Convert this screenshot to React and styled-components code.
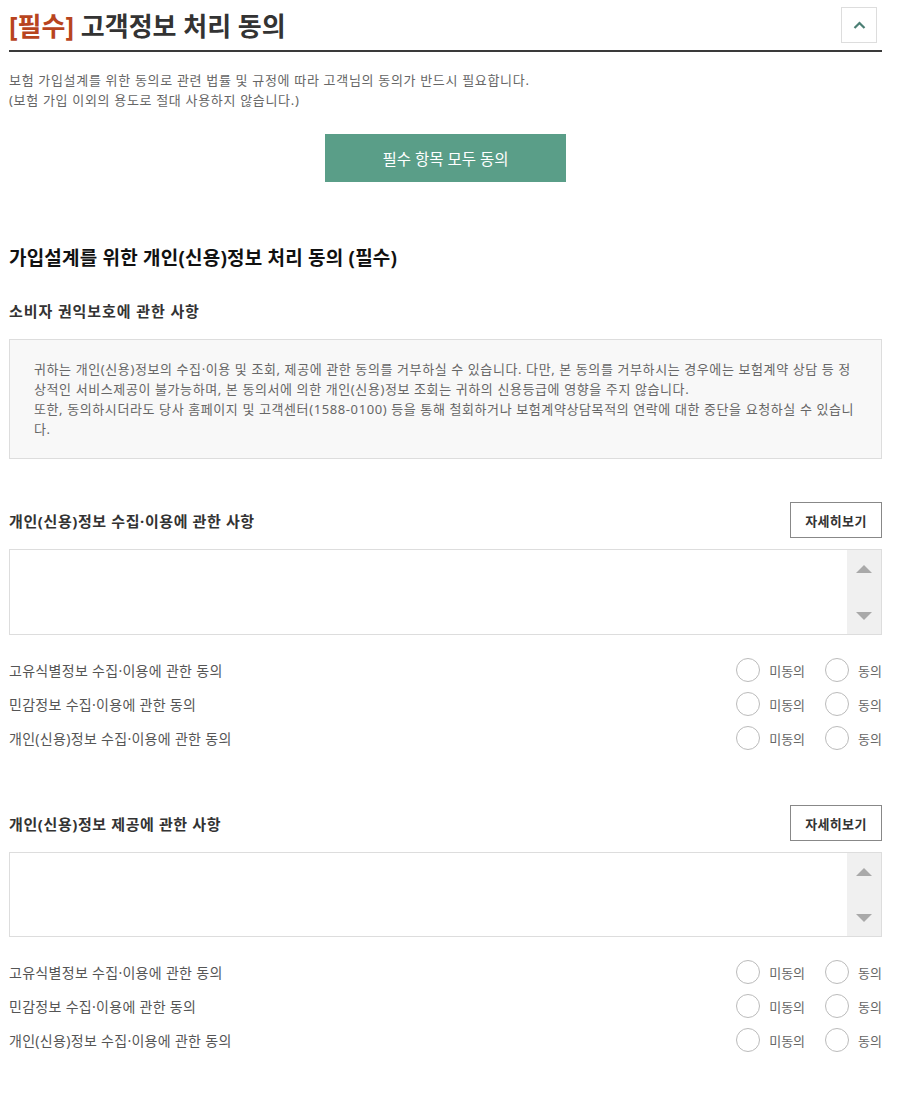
import React from "react";
import styled, { createGlobalStyle } from "styled-components";

const GlobalStyle = createGlobalStyle`
  body {
    margin: 0;
    background: #fff;
    font-family: "Noto Sans", "Noto Sans CJK KR", sans-serif;
  }
`;

const Page = styled.div`
  width: 873px;
  padding: 0 0 40px 9px;
`;

const Header = styled.header`
  display: flex;
  align-items: center;
  justify-content: space-between;
  height: 50px;
  border-bottom: 2px solid #3a3a3a;
`;

const Title = styled.h1`
  margin: 0;
  font-size: 26px;
  font-weight: 700;
  color: #333;
  letter-spacing: 0;
  span {
    color: #b8441e;
  }
`;

const ToggleButton = styled.button`
  width: 36px;
  height: 36px;
  margin-right: 5px;
  border: 1px solid #ddd;
  background: #fff;
  display: flex;
  align-items: center;
  justify-content: center;
  padding: 0;
`;

const Intro = styled.p`
  margin: 18px 0 0;
  font-size: 13px;
  line-height: 20px;
  letter-spacing: 0.68px;
  color: #666;
`;

const AgreeAllRow = styled.div`
  display: flex;
  justify-content: center;
  margin-top: 24px;
`;

const AgreeAllButton = styled.button`
  width: 241px;
  height: 48px;
  border: 0;
  background: #5a9e88;
  color: #fff;
  font-family: inherit;
  font-size: 15.5px;
`;

const SectionTitle = styled.h2`
  margin: 63px 0 0;
  font-size: 19px;
  line-height: 26px;
  letter-spacing: 0.2px;
  font-weight: 700;
  color: #111;
`;

const SubTitle = styled.h3`
  margin: 30px 0 0;
  font-size: 15px;
  line-height: 20px;
  letter-spacing: 0.9px;
  font-weight: 700;
  color: #333;
`;

const NoticeBox = styled.div`
  margin-top: 18px;
  padding: 19px 20px 19px 24px;
  border: 1px solid #ddd;
  background: #f8f8f8;
  font-size: 13px;
  line-height: 20px;
  letter-spacing: 0.6px;
  word-break: break-all;
  color: #666;
`;

const TermsHead = styled.div`
  display: flex;
  align-items: center;
  justify-content: space-between;
  margin-top: ${(p) => p.$gap}px;
`;

const TermsTitle = styled.h3`
  margin: 0;
  font-size: 15px;
  letter-spacing: 0.6px;
  font-weight: 700;
  color: #333;
`;

const DetailButton = styled.button`
  width: 92px;
  height: 36px;
  border: 1px solid #888;
  background: #fff;
  font-family: inherit;
  font-size: 13px;
  letter-spacing: 0.3px;
  font-weight: 700;
  color: #333;
  padding: 0;
`;

const ScrollBox = styled.div`
  box-sizing: border-box;
  margin-top: 11px;
  height: ${(p) => p.$h}px;
  border: 1px solid #ddd;
  display: flex;
  justify-content: flex-end;
`;

const ScrollBar = styled.div`
  width: 34px;
  background: #f0f0f0;
  display: flex;
  flex-direction: column;
  justify-content: space-between;
  align-items: center;
  padding: 15px 0 14px;
`;

const Arrow = styled.span`
  width: 0;
  height: 0;
  border-left: 8px solid transparent;
  border-right: 8px solid transparent;
  ${(p) =>
    p.$up
      ? "border-bottom: 8px solid #a9a9a9;"
      : "border-top: 8px solid #a9a9a9;"}
`;

const Rows = styled.div`
  margin-top: 23px;
  display: flex;
  flex-direction: column;
  gap: 10px;
`;

const Row = styled.div`
  display: flex;
  align-items: center;
  justify-content: space-between;
  height: 24px;
`;

const RowLabel = styled.span`
  font-size: 14px;
  letter-spacing: 0.3px;
  color: #555;
`;

const Choices = styled.div`
  display: flex;
  align-items: center;
`;

const Choice = styled.label`
  display: flex;
  align-items: center;
  margin-left: ${(p) => p.$ml}px;
  font-size: 13px;
  color: #666;
`;

const Circle = styled.span`
  width: 22px;
  height: 22px;
  border: 1px solid #bbb;
  border-radius: 50%;
  margin-right: 9px;
  background: #fff;
`;

const rowItems = [
  "고유식별정보 수집·이용에 관한 동의",
  "민감정보 수집·이용에 관한 동의",
  "개인(신용)정보 수집·이용에 관한 동의",
];

const TermsSection = ({ title, gap, boxHeight }) => (
  <>
    <TermsHead $gap={gap}>
      <TermsTitle>{title}</TermsTitle>
      <DetailButton>자세히보기</DetailButton>
    </TermsHead>
    <ScrollBox $h={boxHeight}>
      <ScrollBar>
        <Arrow $up />
        <Arrow />
      </ScrollBar>
    </ScrollBox>
    <Rows>
      {rowItems.map((item) => (
        <Row key={item}>
          <RowLabel>{item}</RowLabel>
          <Choices>
            <Choice $ml={0}>
              <Circle />
              미동의
            </Choice>
            <Choice $ml={20}>
              <Circle />
              동의
            </Choice>
          </Choices>
        </Row>
      ))}
    </Rows>
  </>
);

const App = () => {
  return (
    <Page>
      <GlobalStyle />
      <Header>
        <Title>
          <span>[필수]</span> 고객정보 처리 동의
        </Title>
        <ToggleButton aria-label="접기">
          <svg width="13" height="8" viewBox="0 0 13 8">
            <path d="M1.5 7 L6.5 2 L11.5 7" fill="none" stroke="#4b7f74" strokeWidth="2.2" />
          </svg>
        </ToggleButton>
      </Header>
      <Intro>
        보험 가입설계를 위한 동의로 관련 법률 및 규정에 따라 고객님의 동의가 반드시 필요합니다.
        <br />
        (보험 가입 이외의 용도로 절대 사용하지 않습니다.)
      </Intro>
      <AgreeAllRow>
        <AgreeAllButton>필수 항목 모두 동의</AgreeAllButton>
      </AgreeAllRow>

      <SectionTitle>가입설계를 위한 개인(신용)정보 처리 동의 (필수)</SectionTitle>
      <SubTitle>소비자 권익보호에 관한 사항</SubTitle>
      <NoticeBox>
        귀하는 개인(신용)정보의 수집·이용 및 조회, 제공에 관한 동의를 거부하실 수 있습니다. 다만, 본 동의를 거부하시는 경우에는 보험계약 상담 등 정상적인 서비스제공이 불가능하며, 본 동의서에 의한 개인(신용)정보 조회는 귀하의 신용등급에 영향을 주지 않습니다.
        <br />
        또한, 동의하시더라도 당사 홈페이지 및 고객센터(1588-0100) 등을 통해 철회하거나 보험계약상담목적의 연락에 대한 중단을 요청하실 수 있습니다.
      </NoticeBox>

      <TermsSection title="개인(신용)정보 수집·이용에 관한 사항" gap={43} boxHeight={86} />
      <TermsSection title="개인(신용)정보 제공에 관한 사항" gap={55} boxHeight={85} />
    </Page>
  );
};

export default App;
